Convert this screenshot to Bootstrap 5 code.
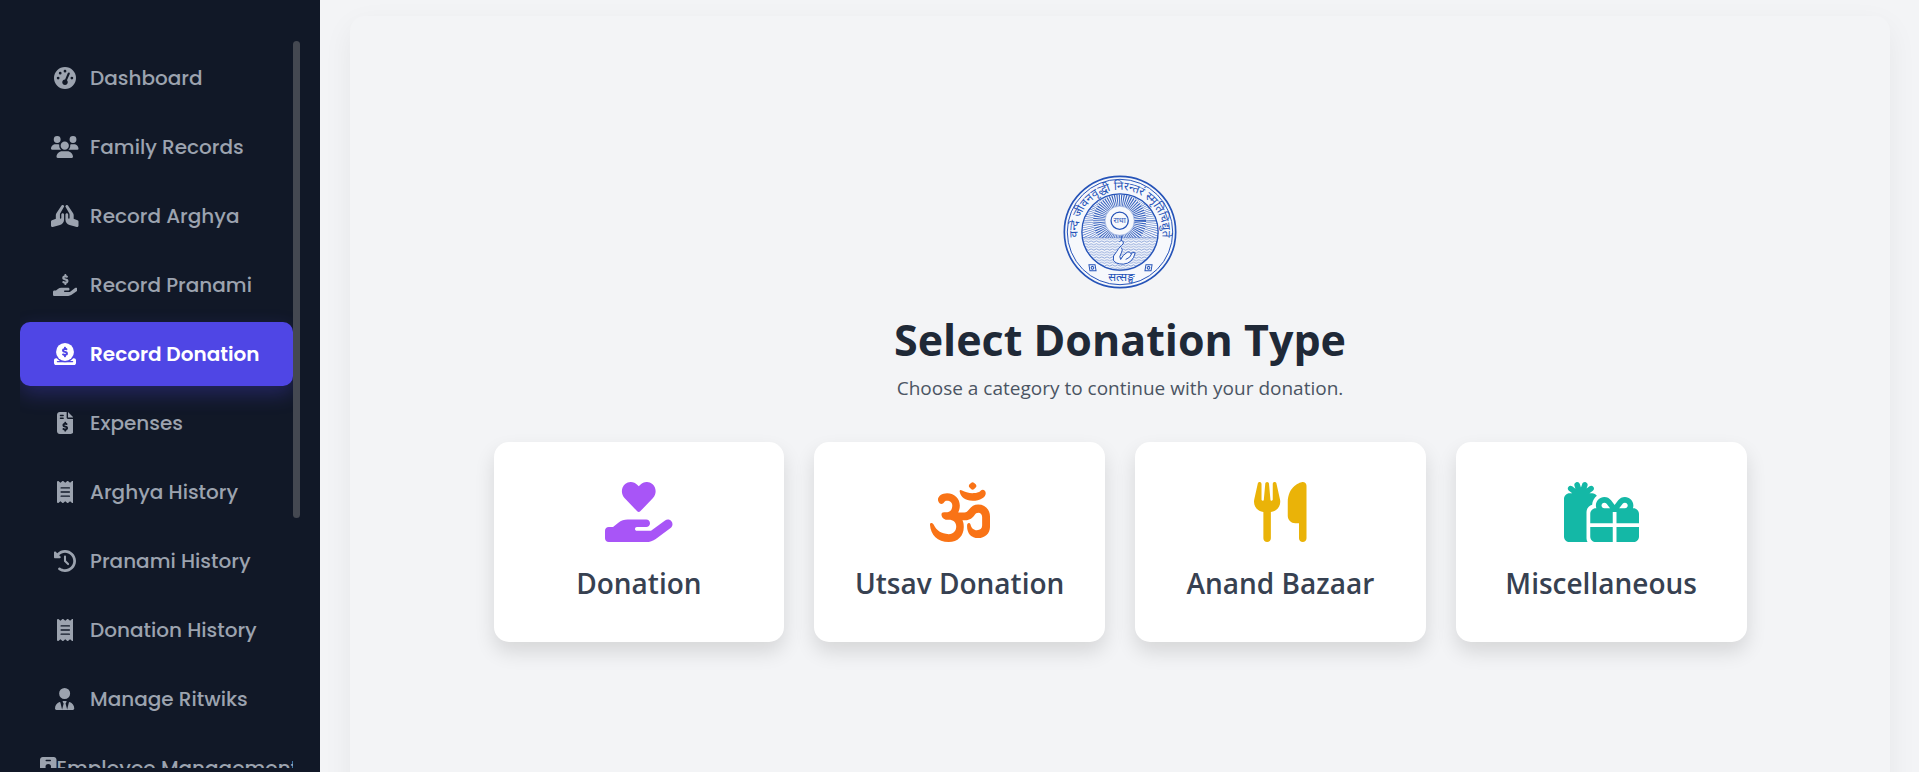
<!DOCTYPE html>
<html lang="en">
<head>
<meta charset="utf-8">
<meta name="viewport" content="width=device-width, initial-scale=1">
<title>Select Donation Type</title>
<link href="https://cdn.jsdelivr.net/npm/bootstrap@5.3.0/dist/css/bootstrap.min.css" rel="stylesheet">
<style>
  body { background: #f3f4f6; font-family: "Segoe UI", "Open Sans", "Noto Sans", sans-serif; }
  .sidebar { width: 320px; background: #111827; padding: 41px 20px 4px; font-family: Poppins, Inter, sans-serif; }
  .side-list { padding-top: 5px; gap: 5px; }
  .side-link { height: 64px; padding: 0 20px; border-radius: 10px; color: #9ca3af; font-size: 20px; font-weight: 500; white-space: nowrap; }
  .side-link:hover { color: #fff; }
  .side-link.active { background: #4f46e5; color: #fff; font-weight: 600; box-shadow: 0 8px 20px rgba(79, 70, 229, .3); }
  .side-icon { width: 50px; min-width: 17px; }
  .side-icon svg, .type-icon svg, .side-icon-slim svg { display: block; fill: currentColor; }
  .side-icon svg, .side-icon-slim svg { height: 22px; }
  .side-thumb { width: 7px; height: 477px; border-radius: 4px; background: #444851; }
  .page-main { padding: 16px 29px 0 30px; }
  .panel { min-height: calc(100vh + 12px); border-radius: 15px; background: #f3f4f6; box-shadow: 0 10px 30px rgba(0, 0, 0, .06); }
  .panel-inner { width: 100%; max-width: 1253px; }
  .seal { width: 116px; height: 116px; }
  .page-title { font-size: 43px; line-height: 60px; font-weight: 700; color: #1f2937; margin: 20px 0 0; }
  .page-sub { font-size: 19px; line-height: 30px; color: #4b5563; margin: 3px 0 39px; }
  .type-grid { --bs-gutter-x: 30px; --bs-gutter-y: 30px; }
  .type-card { height: 200px; padding-top: 40px; border: 0; border-radius: 15px; background: #fff; box-shadow: 0 10px 20px rgba(0, 0, 0, .12); }
  .type-icon svg { height: 60px; }
  .type-label { margin-top: 19px; font-size: 28px; line-height: 45px; font-weight: 600; color: #374151; }
  .c-purple { color: #a855f7; } .c-orange { color: #f97316; } .c-yellow { color: #eab308; } .c-teal { color: #14b8a6; }
</style>
</head>
<body>
<svg width="0" height="0" class="position-absolute" aria-hidden="true">
  <defs>
    <path id="dollar" d="M312 24V34.5c6.4 1.2 12.6 2.7 18.2 4.2c12.8 3.4 20.4 16.6 17 29.4s-16.6 20.4-29.4 17c-10.9-2.9-21.1-4.9-30.2-5c-7.3-.1-14.7 1.7-19.4 4.4c-2.1 1.3-3.1 2.4-3.5 3c-.3 .5-.7 1.2-.7 2.8c0 .3 0 .5 0 .6c.2 .2 .9 1.2 3.3 2.6c5.8 3.5 14.4 6.2 27.4 10.1l.9 .3c11.1 3.3 25.9 7.8 37.9 15.3c13.7 8.6 26.1 22.9 26.4 44.9c.3 22.5-11.4 38.9-26.7 48.5c-6.7 4.1-13.9 7-21.3 8.8V232c0 13.3-10.7 24-24 24s-24-10.7-24-24V220.6c-9.5-2.3-18.2-5.3-25.6-7.8c-2.1-.7-4.1-1.4-6-2c-12.6-4.2-19.4-17.8-15.2-30.4s17.8-19.4 30.4-15.2c2.6 .9 5 1.7 7.3 2.5c13.6 4.6 23.4 7.9 33.9 8.3c8 .3 15.1-1.6 19.2-4.1c1.9-1.2 2.8-2.2 3.2-2.9c.4-.6 .9-1.8 .8-4.1l0-.2c0-1 0-2.1-4-4.6c-5.7-3.6-14.3-6.4-27.1-10.3l-1.9-.6c-10.8-3.2-25-7.5-36.4-14.4c-13.5-8.1-26.5-22-26.6-44.1c-.1-22.9 12.9-38.6 27.7-47.4c6.4-3.8 13.3-6.4 20.2-8.2V24c0-13.3 10.7-24 24-24s24 10.7 24 24z"/>
    <path id="palm" d="M568.2 336.3c13.1 17.8 9.3 42.8-8.5 55.9L433.1 485.5c-23.4 17.2-51.6 26.5-80.7 26.5H192 32c-17.7 0-32-14.3-32-32V416c0-17.7 14.3-32 32-32H68.8l44.9-36c22.7-18.2 50.9-28 80-28H272h16 64c17.7 0 32 14.3 32 32s-14.3 32-32 32H288 272c-8.8 0-16 7.2-16 16s7.2 16 16 16H392.6l119.7-88.2c17.8-13.1 42.8-9.3 55.9 8.5z"/>
    <path id="receipt" d="M14 2.2C22.5-1.7 32.5-.3 39.6 5.8L80 40.4 120.4 5.8c9-7.7 22.3-7.7 31.2 0L192 40.4 232.4 5.8c9-7.7 22.3-7.7 31.2 0L304 40.4 344.4 5.8c7.1-6.1 17.1-7.5 25.6-3.6s14 12.4 14 21.8V488c0 9.4-5.5 17.9-14 21.8s-18.5 2.5-25.6-3.6L304 471.6l-40.4 34.6c-9 7.7-22.3 7.7-31.2 0L192 471.6l-40.4 34.6c-9 7.7-22.3 7.7-31.2 0L80 471.6 39.6 506.2c-7.1 6.1-17.1 7.5-25.6 3.6S0 497.4 0 488V24C0 14.6 5.5 6.1 14 2.2zM96 144c-8.8 0-16 7.2-16 16s7.2 16 16 16H288c8.8 0 16-7.2 16-16s-7.2-16-16-16H96zM80 352c0 8.8 7.2 16 16 16H288c8.8 0 16-7.2 16-16s-7.2-16-16-16H96c-8.8 0-16 7.2-16 16zM96 240c-8.8 0-16 7.2-16 16s7.2 16 16 16H288c8.8 0 16-7.2 16-16s-7.2-16-16-16H96z"/>
  </defs>
</svg>
<div class="d-flex vh-100 overflow-hidden">
  <aside class="sidebar d-flex flex-shrink-0">
    <nav class="side-list nav flex-column flex-nowrap flex-grow-1 overflow-hidden" aria-label="Main">
      <a href="#" class="side-link d-flex align-items-center text-decoration-none flex-shrink-0"><span class="side-icon d-flex justify-content-center"><svg viewBox="0 0 512 512"><path d="M0 256a256 256 0 1 1 512 0A256 256 0 1 1 0 256zM288 96a32 32 0 1 0 -64 0 32 32 0 1 0 64 0zM256 416c35.3 0 64-28.7 64-64c0-17.4-6.9-33.1-18.1-44.6L366 161.7c5.3-12.1-.2-26.3-12.3-31.6s-26.3 .2-31.6 12.3L257.9 288c-.6 0-1.3 0-1.9 0c-35.3 0-64 28.7-64 64s28.7 64 64 64zM176 144a32 32 0 1 0 -64 0 32 32 0 1 0 64 0zM96 288a32 32 0 1 0 0-64 32 32 0 1 0 0 64zm352-32a32 32 0 1 0 -64 0 32 32 0 1 0 64 0z"/></svg></span>Dashboard</a>
      <a href="#" class="side-link d-flex align-items-center text-decoration-none flex-shrink-0"><span class="side-icon d-flex justify-content-center"><svg viewBox="0 0 640 512"><path d="M144 0a80 80 0 1 1 0 160A80 80 0 1 1 144 0zM512 0a80 80 0 1 1 0 160A80 80 0 1 1 512 0zM0 298.7C0 239.8 47.8 192 106.7 192h42.7c15.9 0 31 3.5 44.6 9.7c-1.3 7.2-1.9 14.7-1.9 22.3c0 38.2 16.8 72.5 43.3 96c-.2 0-.4 0-.7 0H21.3C9.6 320 0 310.4 0 298.7zM405.3 320c-.2 0-.4 0-.7 0c26.6-23.5 43.3-57.8 43.3-96c0-7.6-.7-15-1.9-22.3c13.6-6.3 28.7-9.7 44.6-9.7h42.7C592.2 192 640 239.8 640 298.7c0 11.8-9.6 21.3-21.3 21.3H405.3zM224 224a96 96 0 1 1 192 0 96 96 0 1 1 -192 0zM128 485.3C128 411.7 187.7 352 261.3 352H378.7C452.3 352 512 411.7 512 485.3c0 14.7-11.9 26.7-26.7 26.7H154.7c-14.7 0-26.7-11.9-26.7-26.7z"/></svg></span>Family Records</a>
      <a href="#" class="side-link d-flex align-items-center text-decoration-none flex-shrink-0"><span class="side-icon d-flex justify-content-center"><svg viewBox="0 0 640 512"><path d="M351.2 4.8c3.2-2 6.6-3.3 10-4.1c4.7-1 9.6-.9 14.1 .1c7.7 1.8 14.8 6.5 19.4 13.6L514.6 194.2c8.8 13.1 13.4 28.6 13.4 44.4v73.5c0 6.9 4.4 13 10.9 15.2l79.2 26.4C631.2 358 640 370.2 640 384v96c0 9.9-4.6 19.3-12.5 25.4s-18.1 8.1-27.7 5.5L431 465.9c-56-14.9-95-65.7-95-123.7V224c0-17.7 14.3-32 32-32s32 14.3 32 32v80c0 8.8 7.2 16 16 16s16-7.2 16-16V219.1c0-7-1.8-13.8-5.3-19.8L340.3 48.1c-1.7-3-2.9-6.1-3.6-9.3c-1-4.7-1-9.6 .1-14.1c1.9-8 6.8-15.2 14.3-19.9zm-62.4 0c7.5 4.6 12.4 11.9 14.3 19.9c1.1 4.6 1.2 9.4 .1 14.1c-.7 3.2-1.9 6.3-3.6 9.3L213.3 199.3c-3.5 6-5.3 12.9-5.3 19.8V304c0 8.8 7.2 16 16 16s16-7.2 16-16V224c0-17.7 14.3-32 32-32s32 14.3 32 32V342.3c0 58-39 108.7-95 123.7l-168.7 45c-9.6 2.6-19.9 .5-27.7-5.5S0 490 0 480V384c0-13.8 8.8-26 21.9-30.4l79.2-26.4c6.5-2.2 10.9-8.3 10.9-15.2V238.5c0-15.8 4.7-31.2 13.4-44.4L245.2 14.5c4.6-7.1 11.7-11.8 19.4-13.6c4.6-1.1 9.4-1.2 14.1-.1c3.5 .8 6.9 2.1 10 4.1z"/></svg></span>Record Arghya</a>
      <a href="#" class="side-link d-flex align-items-center text-decoration-none flex-shrink-0"><span class="side-icon d-flex justify-content-center"><svg viewBox="0 0 576 512"><use href="#dollar"/><use href="#palm"/></svg></span>Record Pranami</a>
      <a href="#" aria-current="page" class="side-link active d-flex align-items-center text-decoration-none flex-shrink-0"><span class="side-icon d-flex justify-content-center"><svg viewBox="0 0 512 512"><path fill-rule="evenodd" d="M48 352h16c45 52 110 96 192 96s147-44 192-96h16c26.500 0 48 21.500 48 48v64c0 26.500-21.500 48-48 48H48c-26.500 0-48-21.500-48-48v-64c0-26.500 21.500-48 48-48z"/><path d="M80 416H432a16 16 0 0 1 0 32H80a16 16 0 0 1 0-32z" fill="#4f46e5"/><circle cx="256" cy="208" r="208"/><use href="#dollar" fill="#4f46e5" transform="translate(-18 86) scale(.95)"/></svg></span>Record Donation</a>
      <a href="#" class="side-link d-flex align-items-center text-decoration-none flex-shrink-0"><span class="side-icon d-flex justify-content-center"><svg viewBox="0 0 384 512"><path d="M64 0C28.700 0 0 28.700 0 64V448c0 35.300 28.700 64 64 64H320c35.300 0 64-28.700 64-64V160H256c-17.700 0-32-14.300-32-32V0H64zM256 0V128H384L256 0zM64 80c0-8.800 7.200-16 16-16h64c8.800 0 16 7.200 16 16s-7.200 16-16 16H80c-8.800 0-16-7.200-16-16zm0 64c0-8.800 7.200-16 16-16h64c8.800 0 16 7.200 16 16s-7.200 16-16 16H80c-8.800 0-16-7.200-16-16z"/><use href="#dollar" fill="#111827" transform="translate(-67 225) scale(.9)"/></svg></span>Expenses</a>
      <a href="#" class="side-link d-flex align-items-center text-decoration-none flex-shrink-0"><span class="side-icon d-flex justify-content-center"><svg viewBox="0 0 384 512"><use href="#receipt"/></svg></span>Arghya History</a>
      <a href="#" class="side-link d-flex align-items-center text-decoration-none flex-shrink-0"><span class="side-icon d-flex justify-content-center"><svg viewBox="0 0 512 512"><path d="M75 75L41 41C25.900 25.900 0 36.600 0 57.900V168c0 13.300 10.700 24 24 24H134.100c21.400 0 32.100-25.900 17-41l-30.800-30.800C155 85.500 203 64 256 64c106 0 192 86 192 192s-86 192-192 192c-40.800 0-78.600-12.700-109.700-34.400c-14.500-10.100-34.400-6.600-44.600 7.900s-6.600 34.400 7.900 44.600C151.200 495 201.700 512 256 512c141.400 0 256-114.600 256-256S397.400 0 256 0C185.300 0 121.300 28.700 75 75zm181 53c-13.300 0-24 10.700-24 24V256c0 6.400 2.500 12.500 7 17l72 72c9.400 9.400 24.600 9.400 33.900 0s9.400-24.600 0-33.900l-65-65V152c0-13.300-10.700-24-24-24z"/></svg></span>Pranami History</a>
      <a href="#" class="side-link d-flex align-items-center text-decoration-none flex-shrink-0"><span class="side-icon d-flex justify-content-center"><svg viewBox="0 0 384 512"><use href="#receipt"/></svg></span>Donation History</a>
      <a href="#" class="side-link d-flex align-items-center text-decoration-none flex-shrink-0"><span class="side-icon d-flex justify-content-center"><svg viewBox="0 0 448 512"><path d="M224 256A128 128 0 1 1 224 0a128 128 0 1 1 0 256zm-30.400 48h60.800c11.900 0 19.200 12.900 13.100 23.100l-21.400 35.700 37 137.300 39.600-161.600c2.200-9 10.900-15.100 19.900-12.600C403.700 344.600 448 407.100 448 479.300c0 18.100-14.600 32.700-32.700 32.700H32.700C14.600 512 0 497.400 0 479.300c0-72.200 44.300-134.700 105.300-153.400c9-2.500 17.700 3.600 19.900 12.600L164.800 500 201.800 362.800 180.400 327.100c-6.100-10.200 1.200-23.100 13.200-23.100z"/></svg></span>Manage Ritwiks</a>
      <a href="#" class="side-link d-flex align-items-center text-decoration-none flex-shrink-0"><span class="side-icon-slim flex-shrink-0"><svg viewBox="0 0 384 512"><path fill-rule="evenodd" d="M64 0C28.700 0 0 28.700 0 64V448c0 35.300 28.700 64 64 64H320c35.300 0 64-28.700 64-64V64c0-35.300-28.700-64-64-64H64zM144 64h96a16 16 0 0 1 0 32h-96a16 16 0 0 1 0-32zM192 160a64 64 0 1 1 0 128a64 64 0 1 1 0-128zM160 320h64c44 0 80 36 80 80c0 9-7 16-16 16H96c-9 0-16-7-16-16c0-44 36-80 80-80z"/></svg></span>Employee Management</a>
    </nav>
    <div class="side-thumb flex-shrink-0"></div>
  </aside>
  <main class="page-main flex-grow-1 overflow-hidden">
    <section class="panel d-flex flex-column align-items-center justify-content-center">
      <div class="panel-inner text-center">
        <svg class="seal" viewBox="60 43 350 344" role="img" aria-label="Seal" fill="none" stroke="#2553b8">
          <defs>
            <clipPath id="sky"><path d="M122 232A115 115 0 1 1 350 232z"/></clipPath>
            <pattern id="ripple" width="16" height="8" patternUnits="userSpaceOnUse"><path d="M0 4q4-4 8 0t8 0" stroke="#2553b8" stroke-width="1.500"/></pattern>
            <path id="arcTopText" d="M123 278A128 128 0 1 1 347 278"/>
          </defs>
          <circle cx="235" cy="215" r="168" stroke-width="5" fill="#f6f8fc"/>
          <circle cx="235" cy="215" r="159" stroke-width="3"/>
          <circle cx="235" cy="215" r="115" stroke-width="4"/>
          <g clip-path="url(#sky)">
            <circle cx="234" cy="181" r="62" stroke-width="36" stroke-dasharray="3 3" opacity=".9"/>
            <circle cx="234" cy="181" r="112" stroke-width="64" stroke-dasharray="2 5" opacity=".85"/>
          </g>
          <path d="M122 232A115 115 0 0 0 350 232z" fill="url(#ripple)" stroke-width="1"/>
          <circle cx="234" cy="181" r="44" fill="#f6f8fc" stroke-width="1"/>
          <circle cx="234" cy="181" r="26" stroke-width="4"/>
          <path d="M239 226v16M233 244q6-6 12 0q2 8-6 12q-10 10-14 18q-14 14-10 26q6 12 30 12q28-2 36-34q-10-4-14 2q-2-8-10-4q-14 8-20 22q-6-8 2-20q6-10 0-16M252 298q14-4 20-20" fill="#f6f8fc" stroke-width="3" stroke-linejoin="round"/>
          <g transform="translate(152 323) rotate(40)"><path d="M-14 0L0-12L14 0L0 12z" stroke-width="3"/><circle r="4" stroke-width="3"/></g>
          <g transform="translate(321 323) rotate(-40)"><path d="M-14 0L0-12L14 0L0 12z" stroke-width="3"/><circle r="4" stroke-width="3"/></g>
          <g fill="#2553b8" stroke="none" font-family="'Noto Sans Devanagari', 'Noto Sans', sans-serif" font-size="35" text-anchor="middle">
            <text><textPath href="#arcTopText" startOffset="50%">वन्दे जीवनवृद्धी निरन्तरं स्मृतिचिद्युते</textPath></text>
            <text x="239" y="362">सत्सङ्घ</text>
            <text x="234" y="188" font-size="24">राधा</text>
          </g>
        </svg>
        <h1 class="page-title">Select Donation Type</h1>
        <p class="page-sub">Choose a category to continue with your donation.</p>
        <div class="row type-grid row-cols-1 row-cols-sm-2 row-cols-lg-4">
          <div class="col"><button type="button" class="type-card w-100 d-flex flex-column align-items-center"><span class="type-icon c-purple"><svg viewBox="0 0 576 512"><path d="M275.200 250.500c7 7.400 18.400 7.400 25.500 0l108.900-114.200c31.600-33.200 29.800-88.200-5.600-118.800c-30.800-26.700-76.700-21.900-104.900 7.700L288 36.900l-11.100-11.600C248.700-4.400 202.800-9.200 172 17.500c-35.300 30.600-37.200 85.600-5.600 118.800L275.200 250.500z"/><use href="#palm"/></svg></span><span class="type-label">Donation</span></button></div>
          <div class="col"><button type="button" class="type-card w-100 d-flex flex-column align-items-center"><span class="type-icon c-orange"><svg viewBox="27 27 183 183"><path d="M52 85C48 72 62 61 79 61C103 61 118 78 118 99C118 107 116 114 113 120H132C138 120 141 117 146 111C153 102 162 96 174 96C195 96 210 111 210 132V164C210 184 194 198 174 198C153 198 140 184 140 161C140 150 149 150 151 158C153 167 160 174 170 174C180 174 186 169 186 160V134C186 126 181 121 175 121C169 121 166 123 162 129C154 140 144 144 130 144H126C129 150 130 156 130 164C130 191 112 210 84 210C50 210 29 188 27 158C26 150 35 150 38 157C46 175 62 186 84 186C99 186 107 176 107 163C107 150 98 142 84 142H78C70 142 62 135 62 126C62 121 65 119 70 119H80C89 119 95 110 95 99C95 89 88 84 79 84C73 84 72 86 70 89C65 97 55 95 52 85ZM119 52C124 50 132 61 156 61C170 61 180 57 182 53C188 48 197 52 197 61C197 74 180 84 157 84C134 84 121 72 118 58C117 55 117 53 119 52ZM153 29Q157 26 161 29L167 35Q170 39 167 43L161 49Q157 52 153 49L147 43Q144 39 147 35Z"/></svg></span><span class="type-label">Utsav Donation</span></button></div>
          <div class="col"><button type="button" class="type-card w-100 d-flex flex-column align-items-center"><span class="type-icon c-yellow"><svg viewBox="0 0 448 512"><path d="M416 0C400 0 288 32 288 176V288c0 35.300 28.700 64 64 64h32V480c0 17.700 14.300 32 32 32s32-14.300 32-32V352 240 32c0-17.700-14.300-32-32-32zM64 16C64 7.800 57.900 1 49.700 .1S34.200 4.600 32.400 12.500L2.100 148.800C.7 155.100 0 161.500 0 167.900c0 45.900 35.100 83.600 80 87.700V480c0 17.700 14.300 32 32 32s32-14.300 32-32V255.600c44.900-4.100 80-41.800 80-87.700c0-6.400-.7-12.800-2.100-19.100L191.600 12.500c-1.800-8-9.300-13.300-17.400-12.400S160 7.800 160 16V150.200c0 5.400-4.400 9.800-9.800 9.800c-5.100 0-9.300-3.900-9.800-9L127.900 14.600C127.200 6.300 120.300 0 112 0s-15.200 6.300-15.900 14.600L83.700 151c-.5 5.100-4.700 9-9.800 9c-5.400 0-9.800-4.400-9.800-9.800V16z"/></svg></span><span class="type-label">Anand Bazaar</span></button></div>
          <div class="col"><button type="button" class="type-card w-100 d-flex flex-column align-items-center"><span class="type-icon c-teal"><svg viewBox="0 0 640 512"><path d="M200.600 32C205 19.500 198.500 5.800 186 1.400S159.800 3.500 155.400 16L144.700 46.200l-9.900-29.800C130.600 3.800 117-3 104.400 1.200S85 19 89.200 31.600l8.300 25-27.400-20c-10.700-7.800-25.700-5.400-33.500 5.300s-5.400 25.700 5.300 33.500L70.200 96H48C21.500 96 0 117.500 0 144V464c0 26.500 21.500 48 48 48H200.600c-5.400-9.400-8.600-20.300-8.600-32V256c0-29.900 20.500-55 48.200-62c1.800-31 17.100-58.200 40.100-76.100C271.700 104.700 256.900 96 240 96H217.800l28.300-20.600c10.700-7.800 13.100-22.800 5.300-33.500s-22.800-13.100-33.500-5.300L192.500 55.100 200.600 32zM363.500 185.500L393.100 224H344c-13.300 0-24-10.700-24-24c0-13.100 10.800-24 24.200-24c7.600 0 14.700 3.500 19.300 9.500zM272 200c0 8.400 1.400 16.500 4.100 24H272c-26.500 0-48 21.500-48 48v80H416V256h32v96H640V272c0-26.500-21.500-48-48-48h-4.100c2.700-7.500 4.100-15.600 4.100-24c0-39.900-32.500-72-72.200-72c-22.400 0-43.600 10.400-57.300 28.200L432 195.800l-30.500-39.600c-13.700-17.800-35-28.200-57.300-28.200c-39.700 0-72.200 32.100-72.200 72zM224 464c0 26.500 21.500 48 48 48H416V384H224v80zm224 48H592c26.500 0 48-21.500 48-48V384H448V512zm96-312c0 13.300-10.700 24-24 24H470.900l29.600-38.500c4.600-5.900 11.700-9.500 19.300-9.500c13.400 0 24.200 10.900 24.200 24z"/></svg></span><span class="type-label">Miscellaneous</span></button></div>
        </div>
      </div>
    </section>
  </main>
</div>
<script src="https://cdn.jsdelivr.net/npm/bootstrap@5.3.0/dist/js/bootstrap.bundle.min.js"></script>
</body>
</html>
